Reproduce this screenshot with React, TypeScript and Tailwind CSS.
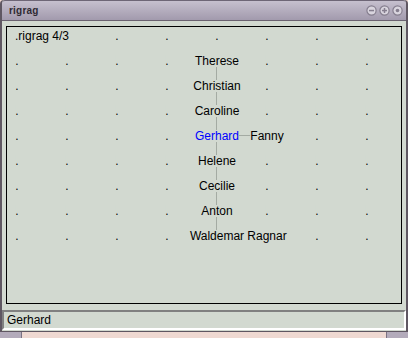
import React from "react";

type Node = { col: number; row: number; text: string; blue?: boolean };

const COLS = 8;
const ROWS = 9;

// labelled nodes of the tree, every other grid point shows a "."
const people: Node[] = [
  { col: 4, row: 1, text: "Therese" },
  { col: 4, row: 2, text: "Christian" },
  { col: 4, row: 3, text: "Caroline" },
  { col: 4, row: 4, text: "Gerhard", blue: true },
  { col: 5, row: 4, text: "Fanny" },
  { col: 4, row: 5, text: "Helene" },
  { col: 4, row: 6, text: "Cecilie" },
  { col: 4, row: 7, text: "Anton" },
  { col: 4, row: 8, text: "Waldemar" },
  { col: 5, row: 8, text: "Ragnar" },
];

// grid point in panel coordinates
const px = (c: number) => 10 + c * 50;
const py = (r: number) => 9 + r * 25;

function Cell({ node }: { node: Node }) {
  return (
    <span
      className={`absolute -translate-x-1/2 -translate-y-1/2 whitespace-nowrap bg-[#d2d9d0] text-[12px] leading-[12px] ${
        node.blue ? "text-[#0000ff]" : "text-black"
      }`}
      style={{ left: px(node.col), top: py(node.row) }}
    >
      {node.text}
    </span>
  );
}

function TitleButton({ kind }: { kind: "min" | "max" | "close" }) {
  return (
    <svg width="11" height="11" viewBox="0 0 11 11">
      <circle cx="5.5" cy="5.5" r="4.6" fill="#d9d5de" stroke="#857e8e" strokeWidth="1.2" />
      {kind === "min" && <rect x="3" y="4.8" width="5" height="1.5" fill="#857e8e" />}
      {kind === "max" && (
        <>
          <rect x="3" y="4.8" width="5" height="1.5" fill="#857e8e" />
          <rect x="4.75" y="3" width="1.5" height="5" fill="#857e8e" />
        </>
      )}
      {kind === "close" && <circle cx="5.5" cy="5.5" r="1.8" fill="#857e8e" />}
    </svg>
  );
}

export default function App() {
  const taken = new Set(people.map((p) => `${p.col}-${p.row}`));
  // the window label covers the first two cells of row 0
  taken.add("0-0");
  taken.add("1-0");

  const dots: Node[] = [];
  for (let r = 0; r < ROWS; r++) {
    for (let c = 0; c < COLS; c++) {
      if (!taken.has(`${c}-${r}`)) dots.push({ col: c, row: r, text: "." });
    }
  }

  return (
    <div
      className="w-[408px] h-[338px] flex flex-col bg-[#efd9d2] overflow-hidden"
      style={{ fontFamily: '"Liberation Sans", Arial, sans-serif' }}
    >
      <div className="flex flex-col h-[331px] border-x-2 border-[#5f5762] rounded-t-[4px] bg-[#d2d9d0]">
        {/* title bar */}
        <div className="h-[21px] shrink-0 flex items-center justify-between pl-[7px] pr-[3px] bg-gradient-to-b from-[#c6c0ce] to-[#a29aad] border-t border-[#6e6676] border-b border-b-[#6a6270] rounded-t-[3px]">
          <span className="text-[10px] font-bold text-[#2e2a33] leading-none tracking-[0.2px]">rigrag</span>
          <div className="flex items-center gap-[2px]">
            <TitleButton kind="min" />
            <TitleButton kind="max" />
            <TitleButton kind="close" />
          </div>
        </div>

        {/* canvas */}
        <div className="px-[4px] pt-[5px]">
          <div className="relative h-[278px] border border-black bg-[#d2d9d0] overflow-hidden">
            <div className="absolute left-[209px] top-[34px] w-px h-[175px] bg-[#a4aba3]" />
            <div className="absolute left-[210px] top-[108px] w-[50px] h-px bg-[#a4aba3]" />
            {dots.map((d) => (
              <Cell key={`${d.col}-${d.row}`} node={d} />
            ))}
            <span className="absolute left-[8px] top-[3px] whitespace-nowrap bg-[#d2d9d0] text-[12px] leading-[12px] text-black">
              .rigrag 4/3
            </span>
            {people.map((p) => (
              <Cell key={p.text} node={p} />
            ))}
          </div>
        </div>

        {/* entry */}
        <div className="mt-[6px] h-[20px] border-t-2 border-l-2 border-[#808080] border-b-2 border-r-2 border-b-white border-r-white bg-[#d2d9d0] flex items-center pl-[3px]">
          <span className="text-[12px] leading-[12px] text-black">Gerhard</span>
        </div>
      </div>

      {/* bottom frame edge over the desktop */}
      <div className="flex-1 flex border-t border-[#5f5762]">
        <div className="w-[22px] bg-[#b3abbb] border-r border-[#7a7282]" />
        <div className="flex-1" />
        <div className="w-[22px] bg-[#b3abbb] border-l border-[#7a7282]" />
      </div>
    </div>
  );
}
